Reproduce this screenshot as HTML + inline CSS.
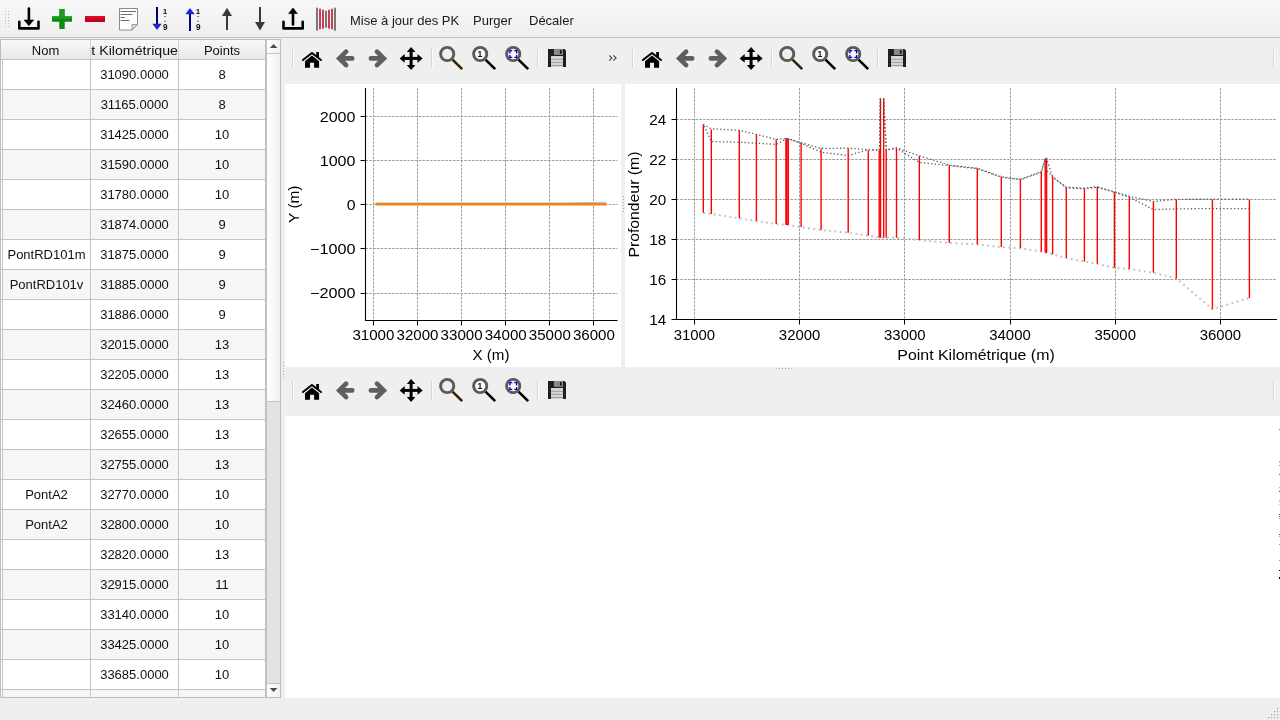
<!DOCTYPE html>
<html><head><meta charset="utf-8">
<style>
html,body{margin:0;padding:0;}
body{width:1280px;height:720px;overflow:hidden;position:relative;will-change:transform;background:#efefef;font-family:"Liberation Sans", sans-serif;font-size:13px;color:#000;}
.abs{position:absolute;}
#tb{left:0;top:0;width:1280px;height:37px;background:linear-gradient(#f8f8f8,#eeeeee);border-bottom:1px solid #c2c2c2;}
.tbt{position:absolute;top:12.8px;font-size:13px;line-height:16px;white-space:nowrap;color:#1a1a1a;}
#tbl{left:0;top:39px;width:266px;height:659px;overflow:hidden;background:#fff;}
.hdr{position:absolute;top:40px;height:19px;padding-top:1px;box-sizing:border-box;background:linear-gradient(#f8f8f8,#e9e9e9);text-align:center;line-height:19px;white-space:nowrap;overflow:hidden;color:#111;}
.cell{position:absolute;height:29px;line-height:29px;text-align:center;white-space:nowrap;overflow:hidden;color:#111;}
.vl{position:absolute;width:1px;background:#c4c4c4;}
.hl{position:absolute;height:1px;background:#c4c4c4;}
svg{position:absolute;overflow:visible;}
</style></head><body>

<div id="tb" class="abs"></div>
<svg style="left:0;top:0" width="40" height="37">
<rect x="5.0" y="11" width="1" height="1" fill="#b9b9b9"/>
<rect x="8.0" y="11" width="1" height="1" fill="#b9b9b9"/>
<rect x="5.0" y="14" width="1" height="1" fill="#b9b9b9"/>
<rect x="8.0" y="14" width="1" height="1" fill="#b9b9b9"/>
<rect x="5.0" y="17" width="1" height="1" fill="#b9b9b9"/>
<rect x="8.0" y="17" width="1" height="1" fill="#b9b9b9"/>
<rect x="5.0" y="20" width="1" height="1" fill="#b9b9b9"/>
<rect x="8.0" y="20" width="1" height="1" fill="#b9b9b9"/>
<rect x="5.0" y="23" width="1" height="1" fill="#b9b9b9"/>
<rect x="8.0" y="23" width="1" height="1" fill="#b9b9b9"/>
<rect x="5.0" y="26" width="1" height="1" fill="#b9b9b9"/>
<rect x="8.0" y="26" width="1" height="1" fill="#b9b9b9"/>
</svg>
<svg style="left:0;top:0" width="345" height="37" viewBox="0 0 345 37">
<!-- download -->
<g fill="none" stroke="#000" stroke-width="2.6" stroke-linecap="round" stroke-linejoin="round">
<path d="M19.3 21.8v6.6h19.2v-6.6"/>
<path d="M28.9 8.5v13"/>
</g>
<path d="M24.2 20h9.4l-4.7 5.8z" fill="#000" stroke="#000" stroke-width="0.6" stroke-linejoin="round"/>
<!-- plus -->
<path d="M59.3 9h5.4v7.3h7.3v5.4h-7.3V29h-5.4v-7.3H52v-5.4h7.3z" fill="#0c8a12"/>
<path d="M59.3 9h5.4v7.3h7.3v2.5H52v-2.5h7.3z" fill="#22a628" opacity="0.6"/>
<!-- minus -->
<rect x="85" y="16" width="20" height="6" fill="#c8001c"/>
<rect x="85" y="16" width="20" height="2.5" fill="#e0102a" opacity="0.7"/>
<!-- doc -->
<path d="M119.5 8.5h18v16l-5.5 5.5h-12.5z" fill="#fff" stroke="#8a8a8a" stroke-width="1"/>
<path d="M132 30l5.5-5.5h-5.5z" fill="#dcdcdc" stroke="#8a8a8a" stroke-width="0.8"/>
<g stroke="#6d6d6d" stroke-width="1">
<path d="M120.5 11.5h15.5M120.5 14.5h12M120.5 17.5h4.5M120.5 20.5h9"/>
</g>
<!-- sort down -->
<path d="M157 7v18" stroke="#00007a" stroke-width="2"/>
<path d="M152.3 23.7h9.4l-4.7 6.3z" fill="#2222d0"/>
<text x="165" y="14.1" font-family="Liberation Sans" font-size="8" font-weight="bold" text-anchor="middle" fill="#111">1</text>
<rect x="164.3" y="16" width="1.4" height="0.9" fill="#333"/>
<rect x="164.3" y="20.7" width="1.4" height="0.9" fill="#333"/>
<text x="165.2" y="29.6" font-family="Liberation Sans" font-size="8.2" font-weight="bold" text-anchor="middle" fill="#111">9</text>
<!-- sort up -->
<path d="M190 13v18" stroke="#00007a" stroke-width="2"/>
<path d="M185.3 14.3h9.4l-4.7-6.4z" fill="#2222d0"/>
<text x="198" y="14.1" font-family="Liberation Sans" font-size="8" font-weight="bold" text-anchor="middle" fill="#111">1</text>
<rect x="197.3" y="16" width="1.4" height="0.9" fill="#333"/>
<rect x="197.3" y="20.7" width="1.4" height="0.9" fill="#333"/>
<text x="198.2" y="29.6" font-family="Liberation Sans" font-size="8.2" font-weight="bold" text-anchor="middle" fill="#111">9</text>
<!-- up gray -->
<path d="M227 13v17" stroke="#3a3a3a" stroke-width="2"/>
<path d="M222 16h10l-5-8.2z" fill="#3a3a3a"/>
<!-- down gray -->
<path d="M260 7v17" stroke="#3a3a3a" stroke-width="2"/>
<path d="M255 22h10l-5 8.5z" fill="#3a3a3a"/>
<!-- upload -->
<g fill="none" stroke="#000" stroke-width="2.6" stroke-linecap="round" stroke-linejoin="round">
<path d="M283.5 21.8v6.6h19.2v-6.6"/>
<path d="M293 13v11.5"/>
</g>
<path d="M288.6 13.6h8.8l-4.4-5.6z" fill="#000" stroke="#000" stroke-width="0.6" stroke-linejoin="round"/>
<!-- barcode -->
<g stroke-width="1.7" stroke-linecap="round">
<path d="M317 8.3v21.6M335 8.3v21.6M326 11.3v15.6" stroke="#636363"/>
<path d="M320 9.3v19.3M323 10.3v17.6M329 10.3v17.6M332 9.3v19.3" stroke="#c4203c"/>
</g>
</svg>
<div class="tbt" style="left:350px;">Mise à jour des PK</div>
<div class="tbt" style="left:473px;">Purger</div>
<div class="tbt" style="left:529px;">Décaler</div>
<div id="tbl" class="abs"></div>
<div class="vl" style="left:0;top:39px;height:659px;background:#bdbdbd"></div>
<div class="hl" style="left:0;top:39px;width:266px;background:#bdbdbd"></div>
<div class="hl" style="left:0;top:697px;width:281px;background:#bdbdbd"></div>
<div class="hdr" style="left:1px;width:89px;">Nom</div>
<div class="hdr" style="left:91px;width:87px;text-align:left;"><span style="position:absolute;left:-28px;top:1px;display:inline-block;transform:scaleX(1.09);transform-origin:0 0">Point Kilométrique</span></div>
<div class="hdr" style="left:179px;width:86px;">Points</div>
<div class="hl" style="left:1px;top:59px;width:265px;background:#c2c2c2"></div>
<div class="vl" style="left:90px;top:40px;height:19px;background:#cfcfcf"></div>
<div class="vl" style="left:178px;top:40px;height:19px;background:#cfcfcf"></div>
<div class="abs" style="left:3px;top:60px;width:262px;height:29px;background:#ffffff"></div>
<div class="cell" style="left:91px;top:60px;width:87px;">31090.0000</div>
<div class="cell" style="left:179px;top:60px;width:86px;">8</div>
<div class="hl" style="left:1px;top:89px;width:265px;"></div>
<div class="abs" style="left:3px;top:90px;width:262px;height:29px;background:#f6f6f6"></div>
<div class="cell" style="left:91px;top:90px;width:87px;">31165.0000</div>
<div class="cell" style="left:179px;top:90px;width:86px;">8</div>
<div class="hl" style="left:1px;top:119px;width:265px;"></div>
<div class="abs" style="left:3px;top:120px;width:262px;height:29px;background:#ffffff"></div>
<div class="cell" style="left:91px;top:120px;width:87px;">31425.0000</div>
<div class="cell" style="left:179px;top:120px;width:86px;">10</div>
<div class="hl" style="left:1px;top:149px;width:265px;"></div>
<div class="abs" style="left:3px;top:150px;width:262px;height:29px;background:#f6f6f6"></div>
<div class="cell" style="left:91px;top:150px;width:87px;">31590.0000</div>
<div class="cell" style="left:179px;top:150px;width:86px;">10</div>
<div class="hl" style="left:1px;top:179px;width:265px;"></div>
<div class="abs" style="left:3px;top:180px;width:262px;height:29px;background:#ffffff"></div>
<div class="cell" style="left:91px;top:180px;width:87px;">31780.0000</div>
<div class="cell" style="left:179px;top:180px;width:86px;">10</div>
<div class="hl" style="left:1px;top:209px;width:265px;"></div>
<div class="abs" style="left:3px;top:210px;width:262px;height:29px;background:#f6f6f6"></div>
<div class="cell" style="left:91px;top:210px;width:87px;">31874.0000</div>
<div class="cell" style="left:179px;top:210px;width:86px;">9</div>
<div class="hl" style="left:1px;top:239px;width:265px;"></div>
<div class="abs" style="left:3px;top:240px;width:262px;height:29px;background:#ffffff"></div>
<div class="cell" style="left:3px;top:240px;width:87px;">PontRD101m</div>
<div class="cell" style="left:91px;top:240px;width:87px;">31875.0000</div>
<div class="cell" style="left:179px;top:240px;width:86px;">9</div>
<div class="hl" style="left:1px;top:269px;width:265px;"></div>
<div class="abs" style="left:3px;top:270px;width:262px;height:29px;background:#f6f6f6"></div>
<div class="cell" style="left:3px;top:270px;width:87px;">PontRD101v</div>
<div class="cell" style="left:91px;top:270px;width:87px;">31885.0000</div>
<div class="cell" style="left:179px;top:270px;width:86px;">9</div>
<div class="hl" style="left:1px;top:299px;width:265px;"></div>
<div class="abs" style="left:3px;top:300px;width:262px;height:29px;background:#ffffff"></div>
<div class="cell" style="left:91px;top:300px;width:87px;">31886.0000</div>
<div class="cell" style="left:179px;top:300px;width:86px;">9</div>
<div class="hl" style="left:1px;top:329px;width:265px;"></div>
<div class="abs" style="left:3px;top:330px;width:262px;height:29px;background:#f6f6f6"></div>
<div class="cell" style="left:91px;top:330px;width:87px;">32015.0000</div>
<div class="cell" style="left:179px;top:330px;width:86px;">13</div>
<div class="hl" style="left:1px;top:359px;width:265px;"></div>
<div class="abs" style="left:3px;top:360px;width:262px;height:29px;background:#ffffff"></div>
<div class="cell" style="left:91px;top:360px;width:87px;">32205.0000</div>
<div class="cell" style="left:179px;top:360px;width:86px;">13</div>
<div class="hl" style="left:1px;top:389px;width:265px;"></div>
<div class="abs" style="left:3px;top:390px;width:262px;height:29px;background:#f6f6f6"></div>
<div class="cell" style="left:91px;top:390px;width:87px;">32460.0000</div>
<div class="cell" style="left:179px;top:390px;width:86px;">13</div>
<div class="hl" style="left:1px;top:419px;width:265px;"></div>
<div class="abs" style="left:3px;top:420px;width:262px;height:29px;background:#ffffff"></div>
<div class="cell" style="left:91px;top:420px;width:87px;">32655.0000</div>
<div class="cell" style="left:179px;top:420px;width:86px;">13</div>
<div class="hl" style="left:1px;top:449px;width:265px;"></div>
<div class="abs" style="left:3px;top:450px;width:262px;height:29px;background:#f6f6f6"></div>
<div class="cell" style="left:91px;top:450px;width:87px;">32755.0000</div>
<div class="cell" style="left:179px;top:450px;width:86px;">13</div>
<div class="hl" style="left:1px;top:479px;width:265px;"></div>
<div class="abs" style="left:3px;top:480px;width:262px;height:29px;background:#ffffff"></div>
<div class="cell" style="left:3px;top:480px;width:87px;">PontA2</div>
<div class="cell" style="left:91px;top:480px;width:87px;">32770.0000</div>
<div class="cell" style="left:179px;top:480px;width:86px;">10</div>
<div class="hl" style="left:1px;top:509px;width:265px;"></div>
<div class="abs" style="left:3px;top:510px;width:262px;height:29px;background:#f6f6f6"></div>
<div class="cell" style="left:3px;top:510px;width:87px;">PontA2</div>
<div class="cell" style="left:91px;top:510px;width:87px;">32800.0000</div>
<div class="cell" style="left:179px;top:510px;width:86px;">10</div>
<div class="hl" style="left:1px;top:539px;width:265px;"></div>
<div class="abs" style="left:3px;top:540px;width:262px;height:29px;background:#ffffff"></div>
<div class="cell" style="left:91px;top:540px;width:87px;">32820.0000</div>
<div class="cell" style="left:179px;top:540px;width:86px;">13</div>
<div class="hl" style="left:1px;top:569px;width:265px;"></div>
<div class="abs" style="left:3px;top:570px;width:262px;height:29px;background:#f6f6f6"></div>
<div class="cell" style="left:91px;top:570px;width:87px;">32915.0000</div>
<div class="cell" style="left:179px;top:570px;width:86px;">11</div>
<div class="hl" style="left:1px;top:599px;width:265px;"></div>
<div class="abs" style="left:3px;top:600px;width:262px;height:29px;background:#ffffff"></div>
<div class="cell" style="left:91px;top:600px;width:87px;">33140.0000</div>
<div class="cell" style="left:179px;top:600px;width:86px;">10</div>
<div class="hl" style="left:1px;top:629px;width:265px;"></div>
<div class="abs" style="left:3px;top:630px;width:262px;height:29px;background:#f6f6f6"></div>
<div class="cell" style="left:91px;top:630px;width:87px;">33425.0000</div>
<div class="cell" style="left:179px;top:630px;width:86px;">10</div>
<div class="hl" style="left:1px;top:659px;width:265px;"></div>
<div class="abs" style="left:3px;top:660px;width:262px;height:29px;background:#ffffff"></div>
<div class="cell" style="left:91px;top:660px;width:87px;">33685.0000</div>
<div class="cell" style="left:179px;top:660px;width:86px;">10</div>
<div class="hl" style="left:1px;top:689px;width:265px;"></div>
<div class="abs" style="left:3px;top:690px;width:262px;height:7px;background:#f6f6f6"></div>
<div class="vl" style="left:2px;top:60px;height:637px;"></div>
<div class="vl" style="left:90px;top:60px;height:637px;"></div>
<div class="vl" style="left:178px;top:60px;height:637px;"></div>
<div class="vl" style="left:265px;top:39px;height:659px;width:2px;background:#c0c0c0"></div>
<div class="abs" style="left:267px;top:39px;width:13px;height:658px;background:#e3e3e3"></div>
<div class="vl" style="left:280px;top:39px;height:659px;background:#bdbdbd"></div>
<div class="hl" style="left:267px;top:39px;width:13px;background:#bdbdbd"></div>
<div class="abs" style="left:267px;top:40px;width:13px;height:13px;background:linear-gradient(90deg,#fdfdfd,#f1f1f1)"></div>
<div class="hl" style="left:267px;top:53px;width:13px;background:#c4c4c4"></div>
<div class="abs" style="left:267px;top:54px;width:13px;height:347px;background:linear-gradient(90deg,#ffffff,#f0f0f0)"></div>
<div class="hl" style="left:267px;top:401px;width:13px;background:#c4c4c4"></div>
<div class="hl" style="left:267px;top:683px;width:13px;background:#c4c4c4"></div>
<div class="abs" style="left:267px;top:684px;width:13px;height:13px;background:linear-gradient(90deg,#fdfdfd,#f1f1f1)"></div>
<svg style="left:267px;top:39px" width="13" height="659">
<path d="M2.8 9h7.6l-3.8-4.1z" fill="#4a4a4a"/>
<path d="M2.8 649h7.6l-3.8 4.1z" fill="#4a4a4a"/>
</svg>
<svg style="left:280px;top:360px" width="6" height="20">
<rect x="3" y="2" width="1" height="1" fill="#a8a8a8"/>
<rect x="3" y="5" width="1" height="1" fill="#a8a8a8"/>
<rect x="3" y="8" width="1" height="1" fill="#a8a8a8"/>
<rect x="3" y="11" width="1" height="1" fill="#a8a8a8"/>
<rect x="3" y="14" width="1" height="1" fill="#a8a8a8"/>
<rect x="3" y="17" width="1" height="1" fill="#a8a8a8"/>
</svg>
<div class="abs" style="left:285px;top:84px;width:336px;height:283px;background:#fff"></div>
<div class="abs" style="left:625px;top:84px;width:655px;height:283px;background:#fff"></div>
<div class="abs" style="left:285px;top:416px;width:995px;height:282px;background:#fff"></div>
<svg style="left:285px;top:38px" width="340" height="46" viewBox="0 0 340 46">
<rect x="7" y="11" width="1" height="19" fill="#d6d6d6"/><rect x="8" y="11" width="1" height="19" fill="#fbfbfb"/>
<rect x="146" y="11" width="1" height="19" fill="#d6d6d6"/><rect x="147" y="11" width="1" height="19" fill="#fbfbfb"/>
<rect x="252" y="11" width="1" height="19" fill="#d6d6d6"/><rect x="253" y="11" width="1" height="19" fill="#fbfbfb"/>
<g fill="#000"><path d="M17.9 22.1 L26.96 15.0 L36.0 22.1" fill="none" stroke="#000" stroke-width="1.9" stroke-linecap="round" stroke-linejoin="miter"/><rect x="31.2" y="14" width="2.8" height="5.5"/><path d="M20 23.3 L26.96 17.6 L34.1 23.3 V29.8 H29.1 V24.8 H25 V29.8 H20 Z"/></g>
<g fill="none" stroke="#5f5f5f" stroke-width="4.7" stroke-linecap="round" stroke-linejoin="miter"><path d="M61.1 13.7 L54.3 20.4 L61.1 27.1 M55.5 20.4 H67.2"/><path d="M92.0 13.7 L98.8 20.4 L92.0 27.1 M97.6 20.4 H85.9"/></g>
<g fill="#000"><rect x="124.6" y="12" width="3" height="17"/><rect x="117.2" y="18.9" width="18" height="3"/><path d="M126.1 9.0 L130.4 14.0 H121.8 Z"/><path d="M126.1 32.0 L130.4 26.9 H121.8 Z"/><path d="M114.6 20.4 L119.7 16.1 V24.7 Z"/><path d="M137.7 20.4 L132.5 16.1 V24.7 Z"/></g>
<path d="M167.5 21.6 L177.2 31.1" stroke="#3b2000" stroke-width="2.6"/>
<circle cx="162.2" cy="16" r="6.6" fill="none" stroke="#5a5a5a" stroke-width="2.9"/>
<path d="M200.5 21.6 L210.2 31.1" stroke="#000" stroke-width="2.6"/>
<circle cx="195.2" cy="16" r="6.6" fill="#fafafa" stroke="#5a5a5a" stroke-width="2.9"/>
<text x="194.89999999999998" y="19.1" font-family="Liberation Sans" font-weight="bold" font-size="8.6" text-anchor="middle" fill="#111">1</text>
<path d="M233.5 21.6 L243.2 31.1" stroke="#000" stroke-width="2.6"/>
<circle cx="228.2" cy="16" r="6.6" fill="#fafafa" stroke="#5a5a5a" stroke-width="2.9"/>
<g fill="none" stroke="#0000d0" stroke-width="1.3"><path d="M224.89999999999998 15.4 V12.7 H227.29999999999998"/><path d="M229.29999999999998 12.7 H231.6 V15.4"/><path d="M224.89999999999998 16.9 V19.4 H227.29999999999998"/><path d="M229.29999999999998 19.4 H231.6 V16.9"/></g>
<path d="M263 10.9 H279.5 L281 12.4 V29 H263 Z" fill="#1e1e1e"/><rect x="268.9" y="10.9" width="9.1" height="6" fill="#8a8a8a"/><rect x="274.9" y="12.1" width="1.7" height="3.6" fill="#111"/><rect x="266" y="18" width="12" height="11" fill="#d9d6d2"/><rect x="266" y="20.8" width="12" height="0.9" fill="#9a9894"/><rect x="266" y="23.9" width="12" height="0.9" fill="#9a9894"/><rect x="266" y="27" width="12" height="0.9" fill="#9a9894"/>
<path d="M324.2 17.3 L326.9 20 L324.2 22.6 M328.4 17.3 L331.1 20 L328.4 22.6" fill="none" stroke="#444" stroke-width="1.1"/>
</svg>
<svg style="left:625px;top:38px" width="340" height="46" viewBox="0 0 340 46">
<rect x="7" y="11" width="1" height="19" fill="#d6d6d6"/><rect x="8" y="11" width="1" height="19" fill="#fbfbfb"/>
<rect x="146" y="11" width="1" height="19" fill="#d6d6d6"/><rect x="147" y="11" width="1" height="19" fill="#fbfbfb"/>
<rect x="252" y="11" width="1" height="19" fill="#d6d6d6"/><rect x="253" y="11" width="1" height="19" fill="#fbfbfb"/>
<g fill="#000"><path d="M17.9 22.1 L26.96 15.0 L36.0 22.1" fill="none" stroke="#000" stroke-width="1.9" stroke-linecap="round" stroke-linejoin="miter"/><rect x="31.2" y="14" width="2.8" height="5.5"/><path d="M20 23.3 L26.96 17.6 L34.1 23.3 V29.8 H29.1 V24.8 H25 V29.8 H20 Z"/></g>
<g fill="none" stroke="#5f5f5f" stroke-width="4.7" stroke-linecap="round" stroke-linejoin="miter"><path d="M61.1 13.7 L54.3 20.4 L61.1 27.1 M55.5 20.4 H67.2"/><path d="M92.0 13.7 L98.8 20.4 L92.0 27.1 M97.6 20.4 H85.9"/></g>
<g fill="#000"><rect x="124.6" y="12" width="3" height="17"/><rect x="117.2" y="18.9" width="18" height="3"/><path d="M126.1 9.0 L130.4 14.0 H121.8 Z"/><path d="M126.1 32.0 L130.4 26.9 H121.8 Z"/><path d="M114.6 20.4 L119.7 16.1 V24.7 Z"/><path d="M137.7 20.4 L132.5 16.1 V24.7 Z"/></g>
<path d="M167.5 21.6 L177.2 31.1" stroke="#3b2000" stroke-width="2.6"/>
<circle cx="162.2" cy="16" r="6.6" fill="none" stroke="#5a5a5a" stroke-width="2.9"/>
<path d="M200.5 21.6 L210.2 31.1" stroke="#000" stroke-width="2.6"/>
<circle cx="195.2" cy="16" r="6.6" fill="#fafafa" stroke="#5a5a5a" stroke-width="2.9"/>
<text x="194.89999999999998" y="19.1" font-family="Liberation Sans" font-weight="bold" font-size="8.6" text-anchor="middle" fill="#111">1</text>
<path d="M233.5 21.6 L243.2 31.1" stroke="#000" stroke-width="2.6"/>
<circle cx="228.2" cy="16" r="6.6" fill="#fafafa" stroke="#5a5a5a" stroke-width="2.9"/>
<g fill="none" stroke="#0000d0" stroke-width="1.3"><path d="M224.89999999999998 15.4 V12.7 H227.29999999999998"/><path d="M229.29999999999998 12.7 H231.6 V15.4"/><path d="M224.89999999999998 16.9 V19.4 H227.29999999999998"/><path d="M229.29999999999998 19.4 H231.6 V16.9"/></g>
<path d="M263 10.9 H279.5 L281 12.4 V29 H263 Z" fill="#1e1e1e"/><rect x="268.9" y="10.9" width="9.1" height="6" fill="#8a8a8a"/><rect x="274.9" y="12.1" width="1.7" height="3.6" fill="#111"/><rect x="266" y="18" width="12" height="11" fill="#d9d6d2"/><rect x="266" y="20.8" width="12" height="0.9" fill="#9a9894"/><rect x="266" y="23.9" width="12" height="0.9" fill="#9a9894"/><rect x="266" y="27" width="12" height="0.9" fill="#9a9894"/>
</svg>
<svg style="left:285px;top:370px" width="340" height="46" viewBox="0 0 340 46">
<rect x="7" y="11" width="1" height="19" fill="#d6d6d6"/><rect x="8" y="11" width="1" height="19" fill="#fbfbfb"/>
<rect x="146" y="11" width="1" height="19" fill="#d6d6d6"/><rect x="147" y="11" width="1" height="19" fill="#fbfbfb"/>
<rect x="252" y="11" width="1" height="19" fill="#d6d6d6"/><rect x="253" y="11" width="1" height="19" fill="#fbfbfb"/>
<g fill="#000"><path d="M17.9 22.1 L26.96 15.0 L36.0 22.1" fill="none" stroke="#000" stroke-width="1.9" stroke-linecap="round" stroke-linejoin="miter"/><rect x="31.2" y="14" width="2.8" height="5.5"/><path d="M20 23.3 L26.96 17.6 L34.1 23.3 V29.8 H29.1 V24.8 H25 V29.8 H20 Z"/></g>
<g fill="none" stroke="#5f5f5f" stroke-width="4.7" stroke-linecap="round" stroke-linejoin="miter"><path d="M61.1 13.7 L54.3 20.4 L61.1 27.1 M55.5 20.4 H67.2"/><path d="M92.0 13.7 L98.8 20.4 L92.0 27.1 M97.6 20.4 H85.9"/></g>
<g fill="#000"><rect x="124.6" y="12" width="3" height="17"/><rect x="117.2" y="18.9" width="18" height="3"/><path d="M126.1 9.0 L130.4 14.0 H121.8 Z"/><path d="M126.1 32.0 L130.4 26.9 H121.8 Z"/><path d="M114.6 20.4 L119.7 16.1 V24.7 Z"/><path d="M137.7 20.4 L132.5 16.1 V24.7 Z"/></g>
<path d="M167.5 21.6 L177.2 31.1" stroke="#3b2000" stroke-width="2.6"/>
<circle cx="162.2" cy="16" r="6.6" fill="none" stroke="#5a5a5a" stroke-width="2.9"/>
<path d="M200.5 21.6 L210.2 31.1" stroke="#000" stroke-width="2.6"/>
<circle cx="195.2" cy="16" r="6.6" fill="#fafafa" stroke="#5a5a5a" stroke-width="2.9"/>
<text x="194.89999999999998" y="19.1" font-family="Liberation Sans" font-weight="bold" font-size="8.6" text-anchor="middle" fill="#111">1</text>
<path d="M233.5 21.6 L243.2 31.1" stroke="#000" stroke-width="2.6"/>
<circle cx="228.2" cy="16" r="6.6" fill="#fafafa" stroke="#5a5a5a" stroke-width="2.9"/>
<g fill="none" stroke="#0000d0" stroke-width="1.3"><path d="M224.89999999999998 15.4 V12.7 H227.29999999999998"/><path d="M229.29999999999998 12.7 H231.6 V15.4"/><path d="M224.89999999999998 16.9 V19.4 H227.29999999999998"/><path d="M229.29999999999998 19.4 H231.6 V16.9"/></g>
<path d="M263 10.9 H279.5 L281 12.4 V29 H263 Z" fill="#1e1e1e"/><rect x="268.9" y="10.9" width="9.1" height="6" fill="#8a8a8a"/><rect x="274.9" y="12.1" width="1.7" height="3.6" fill="#111"/><rect x="266" y="18" width="12" height="11" fill="#d9d6d2"/><rect x="266" y="20.8" width="12" height="0.9" fill="#9a9894"/><rect x="266" y="23.9" width="12" height="0.9" fill="#9a9894"/><rect x="266" y="27" width="12" height="0.9" fill="#9a9894"/>
</svg>
<svg style="left:1270px;top:38px" width="10" height="46"><rect x="3" y="11" width="1" height="19" fill="#d6d6d6"/><rect x="4" y="11" width="1" height="19" fill="#fbfbfb"/></svg>
<svg style="left:1270px;top:370px" width="10" height="46"><rect x="3" y="11" width="1" height="19" fill="#d6d6d6"/><rect x="4" y="11" width="1" height="19" fill="#fbfbfb"/></svg>
<svg style="left:1279px;top:0" width="1" height="720"><rect x="0" y="429" width="1" height="1" fill="#777"/><rect x="0" y="461" width="1" height="1" fill="#bbb"/><rect x="0" y="462" width="1" height="1" fill="#f99"/><rect x="0" y="465" width="1" height="1" fill="#999"/><rect x="0" y="474" width="1" height="1" fill="#666"/><rect x="0" y="487" width="1" height="1" fill="#f99"/><rect x="0" y="491" width="1" height="1" fill="#f00"/><rect x="0" y="499" width="1" height="1" fill="#fbb"/><rect x="0" y="501" width="1" height="1" fill="#f88"/><rect x="0" y="504" width="1" height="1" fill="#ccc"/><rect x="0" y="514" width="1" height="1" fill="#f00"/><rect x="0" y="516" width="1" height="1" fill="#666"/><rect x="0" y="518" width="1" height="1" fill="#bbb"/><rect x="0" y="534" width="1" height="1" fill="#f00"/><rect x="0" y="536" width="1" height="1" fill="#f88"/><rect x="0" y="544" width="1" height="1" fill="#999"/><rect x="0" y="560" width="1" height="1" fill="#999"/><rect x="0" y="570" width="1" height="1" fill="#000"/><rect x="0" y="577" width="1" height="1" fill="#000"/><rect x="0" y="578" width="1" height="1" fill="#000"/></svg>
<svg style="left:0;top:0" width="1280" height="720" viewBox="0 0 1280 720">
<path d="M373.5 88 V320.5" stroke="#9c9c9c" stroke-width="1" stroke-dasharray="2.6 1.2" fill="none"/>
<path d="M417.5 88 V320.5" stroke="#9c9c9c" stroke-width="1" stroke-dasharray="2.6 1.2" fill="none"/>
<path d="M461.5 88 V320.5" stroke="#9c9c9c" stroke-width="1" stroke-dasharray="2.6 1.2" fill="none"/>
<path d="M505.5 88 V320.5" stroke="#9c9c9c" stroke-width="1" stroke-dasharray="2.6 1.2" fill="none"/>
<path d="M549.5 88 V320.5" stroke="#9c9c9c" stroke-width="1" stroke-dasharray="2.6 1.2" fill="none"/>
<path d="M593.5 88 V320.5" stroke="#9c9c9c" stroke-width="1" stroke-dasharray="2.6 1.2" fill="none"/>
<path d="M365.5 116.5 H617.5" stroke="#9c9c9c" stroke-width="1" stroke-dasharray="2.6 1.2" fill="none"/>
<path d="M365.5 160.5 H617.5" stroke="#9c9c9c" stroke-width="1" stroke-dasharray="2.6 1.2" fill="none"/>
<path d="M365.5 204.5 H617.5" stroke="#9c9c9c" stroke-width="1" stroke-dasharray="2.6 1.2" fill="none"/>
<path d="M365.5 248.5 H617.5" stroke="#9c9c9c" stroke-width="1" stroke-dasharray="2.6 1.2" fill="none"/>
<path d="M365.5 293.5 H617.5" stroke="#9c9c9c" stroke-width="1" stroke-dasharray="2.6 1.2" fill="none"/>
<path d="M375.5 202.9 H560 L606.5 202.3" stroke="#9cc3e0" stroke-width="1" fill="none"/>
<path d="M375.5 204.3 H606.5" stroke="#ff7f0e" stroke-width="2.6" fill="none"/>
<path d="M365.5 88 V320.5 H617.5" stroke="#000" stroke-width="1.1" fill="none"/>
<path d="M373.5 320.5 v5" stroke="#000" stroke-width="1"/>
<text x="373.4" y="340" font-family="Liberation Sans" font-size="14" fill="#000" text-anchor="middle" textLength="42" lengthAdjust="spacingAndGlyphs">31000</text>
<path d="M417.5 320.5 v5" stroke="#000" stroke-width="1"/>
<text x="417.5" y="340" font-family="Liberation Sans" font-size="14" fill="#000" text-anchor="middle" textLength="42" lengthAdjust="spacingAndGlyphs">32000</text>
<path d="M461.5 320.5 v5" stroke="#000" stroke-width="1"/>
<text x="461.6" y="340" font-family="Liberation Sans" font-size="14" fill="#000" text-anchor="middle" textLength="42" lengthAdjust="spacingAndGlyphs">33000</text>
<path d="M505.5 320.5 v5" stroke="#000" stroke-width="1"/>
<text x="505.7" y="340" font-family="Liberation Sans" font-size="14" fill="#000" text-anchor="middle" textLength="42" lengthAdjust="spacingAndGlyphs">34000</text>
<path d="M549.5 320.5 v5" stroke="#000" stroke-width="1"/>
<text x="549.8" y="340" font-family="Liberation Sans" font-size="14" fill="#000" text-anchor="middle" textLength="42" lengthAdjust="spacingAndGlyphs">35000</text>
<path d="M593.5 320.5 v5" stroke="#000" stroke-width="1"/>
<text x="593.9" y="340" font-family="Liberation Sans" font-size="14" fill="#000" text-anchor="middle" textLength="42" lengthAdjust="spacingAndGlyphs">36000</text>
<path d="M365.5 116.5 h-5" stroke="#000" stroke-width="1"/>
<text x="355.5" y="121.5" font-family="Liberation Sans" font-size="14" fill="#000" text-anchor="end" textLength="35.8" lengthAdjust="spacingAndGlyphs">2000</text>
<path d="M365.5 160.5 h-5" stroke="#000" stroke-width="1"/>
<text x="355.5" y="165.6" font-family="Liberation Sans" font-size="14" fill="#000" text-anchor="end" textLength="35.8" lengthAdjust="spacingAndGlyphs">1000</text>
<path d="M365.5 204.5 h-5" stroke="#000" stroke-width="1"/>
<text x="355.5" y="209.7" font-family="Liberation Sans" font-size="14" fill="#000" text-anchor="end" textLength="8.8" lengthAdjust="spacingAndGlyphs">0</text>
<path d="M365.5 248.5 h-5" stroke="#000" stroke-width="1"/>
<text x="355.5" y="253.9" font-family="Liberation Sans" font-size="14" fill="#000" text-anchor="end" textLength="45.5" lengthAdjust="spacingAndGlyphs">−1000</text>
<path d="M365.5 293.5 h-5" stroke="#000" stroke-width="1"/>
<text x="355.5" y="298.1" font-family="Liberation Sans" font-size="14" fill="#000" text-anchor="end" textLength="45.5" lengthAdjust="spacingAndGlyphs">−2000</text>
<text x="491" y="359.7" font-family="Liberation Sans" font-size="14" fill="#000" text-anchor="middle" textLength="37" lengthAdjust="spacingAndGlyphs">X (m)</text>
<text transform="translate(299.3 204.2) rotate(-90)" x="0" y="0" font-family="Liberation Sans" font-size="14" fill="#000" text-anchor="middle" textLength="37.4" lengthAdjust="spacingAndGlyphs">Y (m)</text>
<path d="M694.5 88 V319.5" stroke="#9c9c9c" stroke-width="1" stroke-dasharray="2.6 1.2" fill="none"/>
<path d="M799.5 88 V319.5" stroke="#9c9c9c" stroke-width="1" stroke-dasharray="2.6 1.2" fill="none"/>
<path d="M904.5 88 V319.5" stroke="#9c9c9c" stroke-width="1" stroke-dasharray="2.6 1.2" fill="none"/>
<path d="M1010.5 88 V319.5" stroke="#9c9c9c" stroke-width="1" stroke-dasharray="2.6 1.2" fill="none"/>
<path d="M1115.5 88 V319.5" stroke="#9c9c9c" stroke-width="1" stroke-dasharray="2.6 1.2" fill="none"/>
<path d="M1220.5 88 V319.5" stroke="#9c9c9c" stroke-width="1" stroke-dasharray="2.6 1.2" fill="none"/>
<path d="M676.5 279.5 H1277" stroke="#9c9c9c" stroke-width="1" stroke-dasharray="2.6 1.2" fill="none"/>
<path d="M676.5 239.5 H1277" stroke="#9c9c9c" stroke-width="1" stroke-dasharray="2.6 1.2" fill="none"/>
<path d="M676.5 199.5 H1277" stroke="#9c9c9c" stroke-width="1" stroke-dasharray="2.6 1.2" fill="none"/>
<path d="M676.5 159.5 H1277" stroke="#9c9c9c" stroke-width="1" stroke-dasharray="2.6 1.2" fill="none"/>
<path d="M676.5 119.5 H1277" stroke="#9c9c9c" stroke-width="1" stroke-dasharray="2.6 1.2" fill="none"/>
<path d="M703.3 212.7 L711.3 214 L739.3 218.2 L756.4 221.1 L776.2 224 L787 224.9 L801.1 227.1 L821.1 230 L848.2 232.7 L868.3 235.6 L880 237.8 L886.3 237.8 L896.5 237.8 L919.3 240 L949.3 242.9 L977.3 244.4 L1001.3 247.1 L1020.4 248.2 L1041.3 251.7 L1046 252.9 L1052.6 254.3 L1066.3 258 L1084.4 261.6 L1097.3 263.8 L1114.4 267.8 L1129.3 268.9 L1153.4 272.7 L1176.3 278.4 L1212.4 309.2 L1249.4 298" stroke="#c2c2c2" stroke-width="2.1" stroke-dasharray="1.8 3.5" stroke-linecap="butt" fill="none"/>
<path d="M703.3 124.4 V212.7" stroke="#ff0000" stroke-width="1.4" fill="none"/>
<path d="M711.3 129.6 V214" stroke="#ff0000" stroke-width="1.4" fill="none"/>
<path d="M739.3 130.4 V218.2" stroke="#ff0000" stroke-width="1.4" fill="none"/>
<path d="M756.4 134.4 V221.1" stroke="#ff0000" stroke-width="1.4" fill="none"/>
<path d="M776.2 139.3 V224" stroke="#ff0000" stroke-width="1.4" fill="none"/>
<path d="M786.1 138.4 V224.9" stroke="#ff0000" stroke-width="1.4" fill="none"/>
<path d="M786.3 138.4 V224.9" stroke="#ff0000" stroke-width="1.4" fill="none"/>
<path d="M788.0 138.4 V224.9" stroke="#ff0000" stroke-width="1.4" fill="none"/>
<path d="M788.2 138.4 V224.9" stroke="#ff0000" stroke-width="1.4" fill="none"/>
<path d="M801.1 142.7 V227.1" stroke="#ff0000" stroke-width="1.4" fill="none"/>
<path d="M821.1 148.4 V230" stroke="#ff0000" stroke-width="1.4" fill="none"/>
<path d="M848.2 148.2 V232.7" stroke="#ff0000" stroke-width="1.4" fill="none"/>
<path d="M868.3 150.3 V235.6" stroke="#ff0000" stroke-width="1.4" fill="none"/>
<path d="M879.2 150.3 V237.8" stroke="#ff0000" stroke-width="1.4" fill="none"/>
<path d="M880.5 98.8 V237.8" stroke="#ff0000" stroke-width="1.4" fill="none"/>
<path d="M883.7 98.8 V237.8" stroke="#ff0000" stroke-width="1.4" fill="none"/>
<path d="M886.2 150.3 V237.8" stroke="#ff0000" stroke-width="1.4" fill="none"/>
<path d="M896.5 148.4 V237.8" stroke="#ff0000" stroke-width="1.4" fill="none"/>
<path d="M919.3 155.8 V240" stroke="#ff0000" stroke-width="1.4" fill="none"/>
<path d="M949.3 165.1 V242.9" stroke="#ff0000" stroke-width="1.4" fill="none"/>
<path d="M977.3 168.2 V244.4" stroke="#ff0000" stroke-width="1.4" fill="none"/>
<path d="M1001.3 176.7 V247.1" stroke="#ff0000" stroke-width="1.4" fill="none"/>
<path d="M1020.4 179.3 V248.2" stroke="#ff0000" stroke-width="1.4" fill="none"/>
<path d="M1041.3 171.5 V251.7" stroke="#ff0000" stroke-width="1.4" fill="none"/>
<path d="M1045.2 158.5 V252.5" stroke="#ff0000" stroke-width="1.4" fill="none"/>
<path d="M1046.6 158.5 V252.9" stroke="#ff0000" stroke-width="1.4" fill="none"/>
<path d="M1052.6 176.5 V254.3" stroke="#ff0000" stroke-width="1.4" fill="none"/>
<path d="M1066.3 187.4 V258" stroke="#ff0000" stroke-width="1.4" fill="none"/>
<path d="M1084.4 188.2 V261.6" stroke="#ff0000" stroke-width="1.4" fill="none"/>
<path d="M1097.3 186.7 V263.8" stroke="#ff0000" stroke-width="1.4" fill="none"/>
<path d="M1114.4 191.8 V267.8" stroke="#ff0000" stroke-width="1.4" fill="none"/>
<path d="M1129.3 196.2 V268.9" stroke="#ff0000" stroke-width="1.4" fill="none"/>
<path d="M1153.4 201.6 V272.7" stroke="#ff0000" stroke-width="1.4" fill="none"/>
<path d="M1176.3 199.3 V278.4" stroke="#ff0000" stroke-width="1.4" fill="none"/>
<path d="M1212.4 199.3 V309.2" stroke="#ff0000" stroke-width="1.4" fill="none"/>
<path d="M1249.4 199.5 V298" stroke="#ff0000" stroke-width="1.4" fill="none"/>
<path d="M703.3 124.4 L711.3 128.8 L739.3 130.4 L756.4 134.4 L776.2 139.3 L787 138.4 L801.1 142.7 L821.1 148.4 L848.2 148.2 L868.3 149.6 L879.5 150 L880.4 98.8 L883.6 98.8 L886.3 150 L896.5 147.8 L919.3 155.8 L949.3 165.1 L977.3 168.2 L1001.3 176.7 L1020.4 179.3 L1041.3 171.6 L1045.5 158.5 L1046.5 158.5 L1052.6 176.7 L1066.3 187.3 L1084.4 188.2 L1097.3 186.7 L1114.4 191.8 L1129.3 196.2 L1153.4 201.6 L1176.3 199.3 L1212.4 199.2 L1249.4 199.2" stroke="#585858" stroke-width="1.3" stroke-dasharray="1.3 2.3" fill="none"/>
<path d="M703.3 124.4 L711.3 141.6 L739.3 142.2 L776.2 144.4 L787 138.4 L801.1 143.3 L821.1 152.2 L848.2 155.6 L868.3 149.6 L879.5 150 L880.4 98.8 L883.6 98.8 L886.3 150 L896.5 148.2 L919.3 162.4 L949.3 165.6 L977.3 168.7 L1001.3 177.2 L1020.4 179.8 L1041.3 172.1 L1045.5 158.5 L1046.5 170 L1052.6 177.2 L1066.3 187.8 L1084.4 188.7 L1097.3 187.2 L1114.4 192.3 L1129.3 197.2 L1153.4 209.6 L1176.3 208.9 L1212.4 208.6 L1249.4 208.6" stroke="#585858" stroke-width="1.3" stroke-dasharray="1.3 2.3" stroke-dashoffset="1.8" fill="none"/>
<path d="M676.5 88 V319.5 H1277" stroke="#000" stroke-width="1.1" fill="none"/>
<path d="M694.5 319.5 v5" stroke="#000" stroke-width="1"/>
<text x="694.4" y="340" font-family="Liberation Sans" font-size="14" fill="#000" text-anchor="middle" textLength="41.5" lengthAdjust="spacingAndGlyphs">31000</text>
<path d="M799.5 319.5 v5" stroke="#000" stroke-width="1"/>
<text x="799.6" y="340" font-family="Liberation Sans" font-size="14" fill="#000" text-anchor="middle" textLength="41.5" lengthAdjust="spacingAndGlyphs">32000</text>
<path d="M904.5 319.5 v5" stroke="#000" stroke-width="1"/>
<text x="904.8" y="340" font-family="Liberation Sans" font-size="14" fill="#000" text-anchor="middle" textLength="41.5" lengthAdjust="spacingAndGlyphs">33000</text>
<path d="M1010.5 319.5 v5" stroke="#000" stroke-width="1"/>
<text x="1010.0" y="340" font-family="Liberation Sans" font-size="14" fill="#000" text-anchor="middle" textLength="41.5" lengthAdjust="spacingAndGlyphs">34000</text>
<path d="M1115.5 319.5 v5" stroke="#000" stroke-width="1"/>
<text x="1115.2" y="340" font-family="Liberation Sans" font-size="14" fill="#000" text-anchor="middle" textLength="41.5" lengthAdjust="spacingAndGlyphs">35000</text>
<path d="M1220.5 319.5 v5" stroke="#000" stroke-width="1"/>
<text x="1220.4" y="340" font-family="Liberation Sans" font-size="14" fill="#000" text-anchor="middle" textLength="41.5" lengthAdjust="spacingAndGlyphs">36000</text>
<path d="M676.5 319.5 h-5" stroke="#000" stroke-width="1"/>
<text x="666.3" y="324.5" font-family="Liberation Sans" font-size="14" fill="#000" text-anchor="end" textLength="17" lengthAdjust="spacingAndGlyphs">14</text>
<path d="M676.5 279.5 h-5" stroke="#000" stroke-width="1"/>
<text x="666.3" y="284.5" font-family="Liberation Sans" font-size="14" fill="#000" text-anchor="end" textLength="17" lengthAdjust="spacingAndGlyphs">16</text>
<path d="M676.5 239.5 h-5" stroke="#000" stroke-width="1"/>
<text x="666.3" y="244.5" font-family="Liberation Sans" font-size="14" fill="#000" text-anchor="end" textLength="17" lengthAdjust="spacingAndGlyphs">18</text>
<path d="M676.5 199.5 h-5" stroke="#000" stroke-width="1"/>
<text x="666.3" y="204.5" font-family="Liberation Sans" font-size="14" fill="#000" text-anchor="end" textLength="17" lengthAdjust="spacingAndGlyphs">20</text>
<path d="M676.5 159.5 h-5" stroke="#000" stroke-width="1"/>
<text x="666.3" y="164.5" font-family="Liberation Sans" font-size="14" fill="#000" text-anchor="end" textLength="17" lengthAdjust="spacingAndGlyphs">22</text>
<path d="M676.5 119.5 h-5" stroke="#000" stroke-width="1"/>
<text x="666.3" y="124.5" font-family="Liberation Sans" font-size="14" fill="#000" text-anchor="end" textLength="17" lengthAdjust="spacingAndGlyphs">24</text>
<text x="976" y="359.7" font-family="Liberation Sans" font-size="14" fill="#000" text-anchor="middle" textLength="157.4" lengthAdjust="spacingAndGlyphs">Point Kilométrique (m)</text>
<text transform="translate(639.3 204.6) rotate(-90)" x="0" y="0" font-family="Liberation Sans" font-size="14" fill="#000" text-anchor="middle" textLength="106" lengthAdjust="spacingAndGlyphs">Profondeur (m)</text>
</svg>
<svg style="left:620px;top:191px" width="6" height="24">
<rect x="3" y="5" width="1" height="1" fill="#a8a8a8"/>
<rect x="3" y="8" width="1" height="1" fill="#a8a8a8"/>
<rect x="3" y="11" width="1" height="1" fill="#a8a8a8"/>
<rect x="3" y="14" width="1" height="1" fill="#a8a8a8"/>
<rect x="3" y="17" width="1" height="1" fill="#a8a8a8"/>
<rect x="3" y="20" width="1" height="1" fill="#a8a8a8"/>
</svg>
<svg style="left:770px;top:366px" width="30" height="4">
<rect x="6" y="2" width="1" height="1" fill="#a8a8a8"/>
<rect x="9" y="2" width="1" height="1" fill="#a8a8a8"/>
<rect x="12" y="2" width="1" height="1" fill="#a8a8a8"/>
<rect x="15" y="2" width="1" height="1" fill="#a8a8a8"/>
<rect x="18" y="2" width="1" height="1" fill="#a8a8a8"/>
<rect x="21" y="2" width="1" height="1" fill="#a8a8a8"/>
</svg>
<svg style="left:1260px;top:700px" width="20" height="20">
<rect x="8" y="17" width="1.2" height="1.2" fill="#a0a0a0"/>
<rect x="11" y="14" width="1.2" height="1.2" fill="#a0a0a0"/>
<rect x="11" y="17" width="1.2" height="1.2" fill="#a0a0a0"/>
<rect x="14" y="11" width="1.2" height="1.2" fill="#a0a0a0"/>
<rect x="14" y="14" width="1.2" height="1.2" fill="#a0a0a0"/>
<rect x="14" y="17" width="1.2" height="1.2" fill="#a0a0a0"/>
<rect x="17" y="8" width="1.2" height="1.2" fill="#a0a0a0"/>
<rect x="17" y="11" width="1.2" height="1.2" fill="#a0a0a0"/>
<rect x="17" y="14" width="1.2" height="1.2" fill="#a0a0a0"/>
<rect x="17" y="17" width="1.2" height="1.2" fill="#a0a0a0"/>
</svg>
</body></html>
